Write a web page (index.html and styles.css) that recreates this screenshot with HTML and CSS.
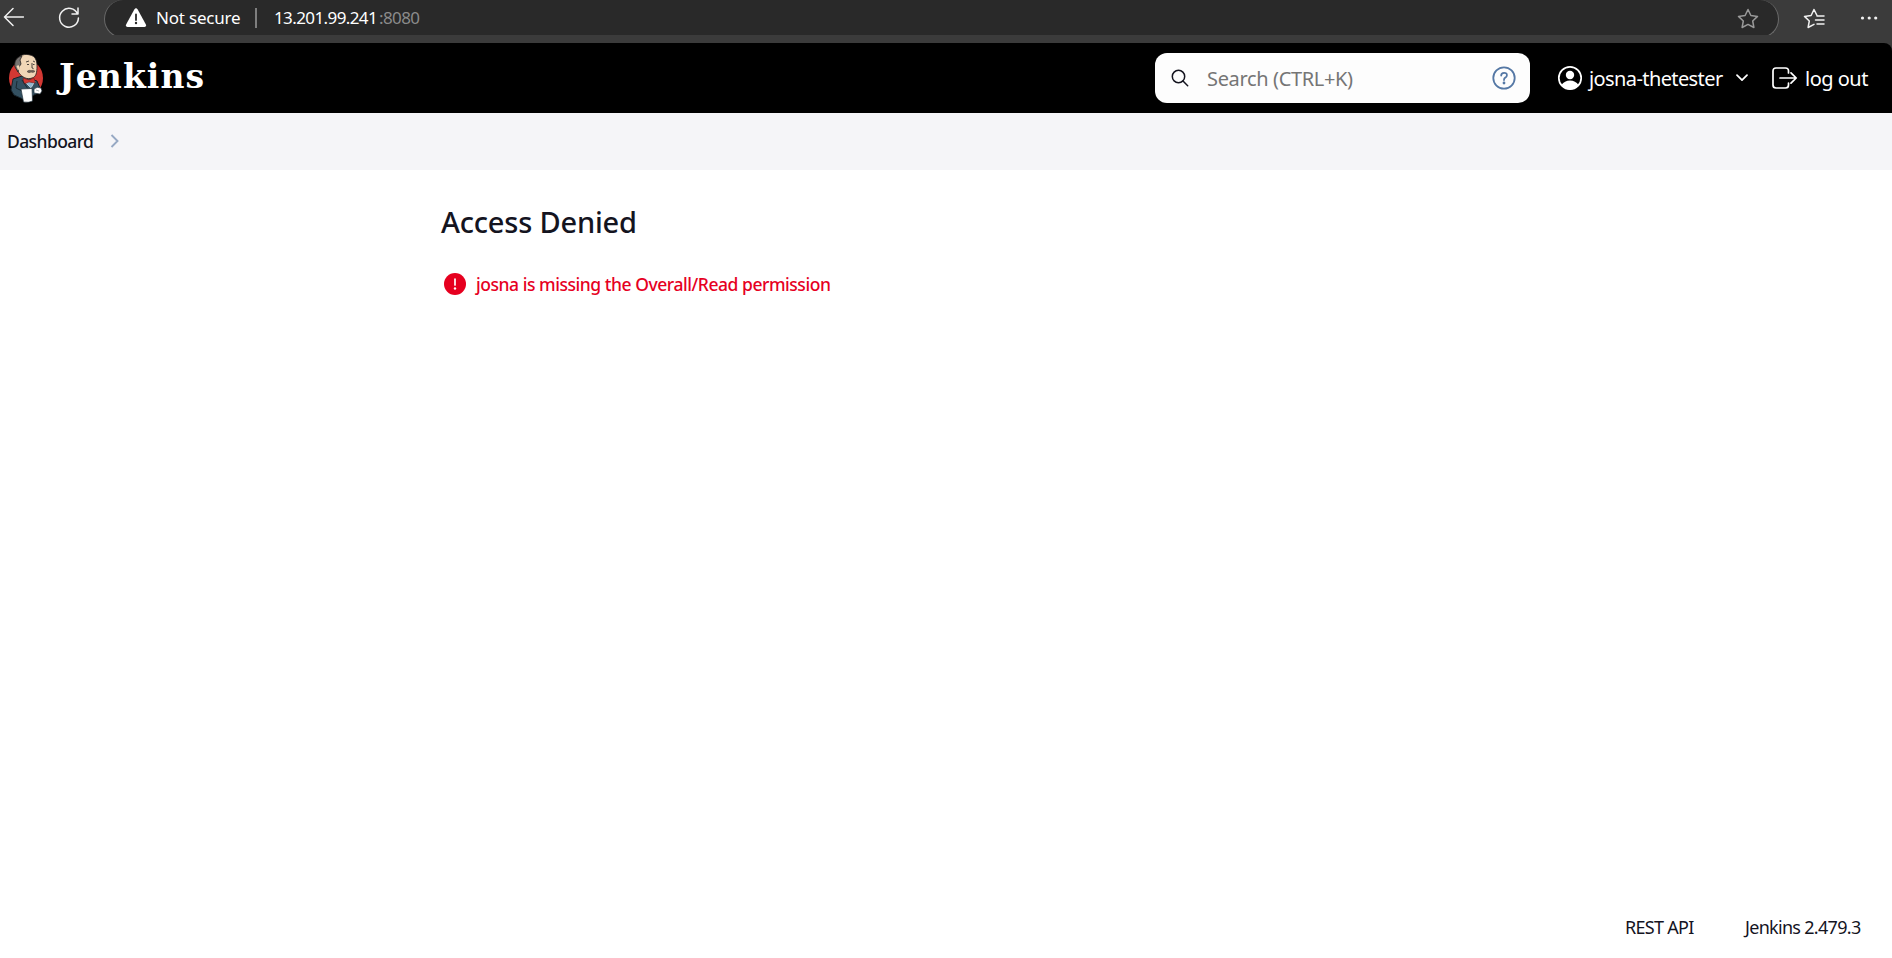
FILE: index.html
```
<!DOCTYPE html>
<html lang="en">
<head>
<meta charset="utf-8">
<title>Access Denied - Jenkins</title>
<link rel="stylesheet" href="styles.css">
</head>
<body>
<div class="browser">
  <svg class="back" width="24" height="22" viewBox="0 0 24 22"><path d="M23.500 11H4.500M13 2.500L4.500 11l8.500 8.500"/></svg>
  <svg class="reload" width="24" height="24" viewBox="0 0 24 24"><path d="M20.600 8A9.400 9.400 0 1 0 21.400 12M21 2v6h-6"/></svg>
  <div class="address">
    <svg class="warn" width="22" height="20" viewBox="0 0 22 20"><path fill="#fff" d="M9.300 1.500Q11-.8 12.700 1.500L20.900 16.400Q21.700 19 19.500 19H2.500Q.3 19 1.100 16.400Z"/><path stroke="#292929" stroke-width="1.800" stroke-linecap="round" d="M11 6.500v5.500"/><circle cx="11" cy="15" r="1.200" fill="#292929"/></svg>
    <span class="secure">Not secure</span>
    <span class="rule"></span>
    <span class="host">13.201.99.241</span><span class="port">:8080</span>
    <svg class="fav" width="22" height="22" viewBox="0 0 22 22"><path d="M11 1.500l2.900 6 6.600.9-4.800 4.600 1.200 6.500-5.900-3.100-5.900 3.100 1.200-6.500L1.500 8.400l6.600-.9Z"/></svg>
  </div>
  <svg class="favs" width="22" height="22" viewBox="0 0 22 22"><path d="M14 7.500L11 1.500 8.100 7.500l-6.600.9 4.800 4.600-1.200 6.500 5.900-3.100M14 8h7M12.500 12H21M14 16h7"/></svg>
  <svg class="more" width="18" height="6" viewBox="0 0 18 6" fill="#f1f1f1"><circle cx="2.500" cy="3" r="1.600"/><circle cx="9.200" cy="3" r="1.600"/><circle cx="15.700" cy="3" r="1.600"/></svg>
</div>
<header class="header">
  <svg class="butler" width="36" height="50" viewBox="0 0 36 50">
    <ellipse cx="18" cy="25" rx="17" ry="18" fill="#d33833"/>
    <path fill="#335061" stroke="#17232b" d="M5 26l9-3 9 3 6 2 3 7-2 5-6 3-9 3-9-4-3-5Z"/>
    <path fill="#f0d6b7" stroke="#231f20" stroke-width=".8" d="M9 7C11 2 17 .5 22 2c5 1 7 5 7 11 0 7-1 11-5 12-5 2-10-1-13-5l-3-5Z"/>
    <path fill="#777370" stroke="#231f20" stroke-width=".8" d="M14 3C8 4 6 9 7 14l3 5 1-5 2-3-1-4Z"/>
    <path fill="#f0d6b7" d="M8.500 13q3-2 3 1t-1.500 3Z"/>
    <path fill="none" stroke="#231f20" stroke-width=".8" d="M18 9l3-1M25 8l2 1M19 11.500h2M25 11.500h1.500M24 10v5l1.500 .5"/>
    <path fill="#6d6259" stroke="#4b4039" stroke-width=".5" d="M19 18.500q2-2 4-1 3-1 4 1-2 1.500-4 .6-2 1.500-4-.6Z"/>
    <path fill="#8fb7d0" stroke="#dce8ee" stroke-width=".7" d="M17 29l10-1-4 7Z"/>
    <path fill="#d33833" stroke="#791d1a" stroke-width=".6" d="M15 25l6 2 5-2 1 5-6-1-5 2Z"/>
    <path fill="none" stroke="#192932" d="M9 28l-1 7 6 3M14 27l6 9 4-1"/>
    <path fill="#fff" stroke="#24343d" stroke-width=".7" d="M13 36l11-.5.500 12.500q-4 2-9 1Z"/>
    <path fill="#fff" stroke="#24343d" stroke-width=".7" d="M26 36q3-3 7-1l1 3-2 3-6-1Z"/>
    <path stroke="#8b969c" stroke-width=".7" d="M28 37l3 1"/>
  </svg>
  <span class="wordmark">Jenkins</span>
  <div class="search">
    <svg class="lens" width="18" height="18" viewBox="0 0 18 18"><circle cx="7.500" cy="7.500" r="6.200"/><path d="M12 12l4.700 4.700"/></svg>
    <span class="placeholder">Search (CTRL+K)</span>
    <svg class="help" width="24" height="24" viewBox="0 0 24 24"><circle cx="12" cy="12" r="10.700"/><path d="M9.200 9.500q0-2.700 2.900-2.700t2.800 2.400q0 1.500-1.600 2.400-1.300.8-1.300 2.500"/><circle class="dot" cx="12" cy="17" r="1.400"/></svg>
  </div>
  <svg class="person" width="26" height="26" viewBox="0 0 26 26"><circle cx="13" cy="13" r="11.200" fill="none" stroke="#fff" stroke-width="1.700"/><circle cx="13" cy="10" r="4.200" fill="#fff"/><path fill="#fff" d="M4.500 20Q7.500 15.500 13 15.500T21.500 20Q18 24.500 13 24.500T4.500 20Z"/></svg>
  <span class="user">josna-thetester</span>
  <svg class="down" width="12" height="8" viewBox="0 0 12 8"><path d="M1 1.200l5 5 5-5"/></svg>
  <svg class="exit" width="26" height="22" viewBox="0 0 26 22"><path d="M16.500 6V4q0-3-3-3H4Q1 1 1 4v14q0 3 3 3h9.500q3 0 3-3v-2M8 11h16M19 5.800l5.200 5.200-5.200 5.200"/></svg>
  <span class="logout">log out</span>
</header>
<nav class="crumbs">
  <span class="crumb">Dashboard</span>
  <svg class="chev" width="9" height="14" viewBox="0 0 9 14"><path d="M1.500 1l6 6-6 6"/></svg>
</nav>
<main class="main">
  <h1 class="title">Access Denied</h1>
  <div class="error">
    <svg width="22" height="22" viewBox="0 0 22 22"><circle cx="11" cy="11" r="11" fill="#e6001f"/><path stroke="#fff" stroke-width="1.700" stroke-linecap="round" d="M11 6v6"/><circle cx="11" cy="15.500" r="1.200" fill="#fff"/></svg>
    <span class="message">josna is missing the Overall/Read permission</span>
  </div>
</main>
<footer class="footer">
  <span class="api">REST API</span>
  <span class="version">Jenkins 2.479.3</span>
</footer>
</body>
</html>
```
FILE: styles.css
```
* { box-sizing: border-box; }
body {
  margin: 0;
  height: 958px;
  display: flex;
  flex-direction: column;
  overflow: hidden;
  background: #fff;
  color: #14141f;
  font-family: "Noto Sans", "Open Sans", sans-serif;
  font-size: 18px;
  white-space: nowrap;
}
svg { flex: none; display: block; }
span { flex: none; }
.browser {
  flex: none;
  height: 43px;
  display: flex;
  align-items: flex-start;
  background: #3b3b3b;
  color: #fff;
}
.back, .reload, .fav, .favs { fill: none; stroke: #f1f1f1; stroke-width: 1.500; stroke-linecap: round; stroke-linejoin: round; }
.back { margin-top: 6px; }
.reload { margin: 6px 0 0 33px; }
.address {
  width: 1675px;
  height: 38px;
  margin-left: 23px;
  padding: 0 19px 0 20px;
  display: flex;
  align-items: flex-start;
  background: #292929;
  border: 1px solid #6b6b6b;
  border-top: 0;
  border-radius: 19px;
  line-height: 24px;
  font-size: 17px;
}
.warn { margin-top: 8px; }
.secure { width: 84px; margin: 6px 0 0 9px; letter-spacing: -.2px; }
.rule { width: 2px; height: 20px; margin: 8px 17px 0 15px; background: #7e7e7e; }
.host { width: 105px; margin-top: 6px; letter-spacing: -.6px; }
.port { margin-top: 6px; letter-spacing: -.6px; color: #8b8b8b; }
.fav { margin: 8px 0 0 auto; stroke: #999; }
.favs { margin: 8px 0 0 24px; }
.more { margin: 15px 0 0 35px; }
.header {
  flex: none;
  height: 70px;
  display: flex;
  align-items: center;
  background: #000;
  color: #fff;
  border-top-right-radius: 8px;
  box-shadow: 8px -8px 0 #3b3b3b;
  font-size: 20px;
}
.butler { margin-left: 8px; }
.wordmark {
  width: 145px;
  margin: -3px 0 0 15px;
  font: bold 33px/40px "DejaVu Serif", serif;
  letter-spacing: 1.100px;
}
.search {
  width: 375px;
  height: 50px;
  margin-left: 951px;
  padding: 0 14px 0 16px;
  display: flex;
  align-items: center;
  border-radius: 12px;
  background: #fdfdfd;
}
.lens { fill: none; stroke: #14141f; stroke-width: 1.500; stroke-linecap: round; }
.placeholder { margin-left: 18px; color: #757575; letter-spacing: -.35px; }
.help { margin-left: auto; fill: none; stroke: #5578a5; stroke-width: 1.800; stroke-linecap: round; }
.dot { fill: #5578a5; stroke: none; }
.person { margin-left: 27px; }
.user { width: 135px; margin-left: 6px; letter-spacing: -.6px; }
.down { margin-left: 12px; fill: none; stroke: #fff; stroke-width: 1.700; stroke-linecap: round; stroke-linejoin: round; }
.exit { margin-left: 24px; fill: none; stroke: #fff; stroke-width: 1.700; stroke-linecap: round; stroke-linejoin: round; }
.logout { margin-left: 7px; letter-spacing: -.5px; }
.crumbs {
  flex: none;
  height: 57px;
  padding: 0 0 1px 7px;
  display: flex;
  align-items: center;
  background: #f5f5f8;
}
.crumb { width: 103px; font-size: 17.500px; font-weight: 500; letter-spacing: -.6px; }
.chev { fill: none; stroke: #97a9c4; stroke-width: 1.900; }
.main { flex: 1; padding: 32px 0 0 441px; }
.title { margin: 0; font-size: 29px; line-height: 40px; font-weight: 500; letter-spacing: -.2px; }
.error { display: flex; align-items: center; height: 24px; margin: 30px 0 0 3px; color: #e6001f; }
.message { margin-left: 10px; font-size: 17.500px; font-weight: 500; letter-spacing: -.46px; }
.footer { flex: none; height: 60px; padding: 17px 31px 0 0; display: flex; justify-content: flex-end; line-height: 24px; }
.api { width: 120px; letter-spacing: -.7px; }
.version { width: 116px; letter-spacing: -.7px; }
```
